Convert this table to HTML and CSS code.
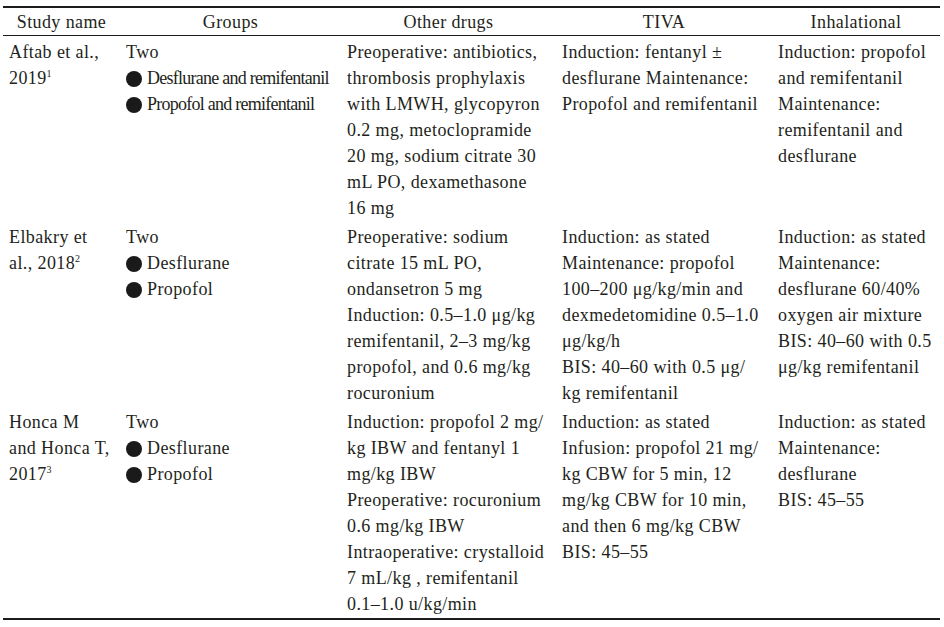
FILE: index.html
```html
<!DOCTYPE html>
<html lang="en">
<head>
<meta charset="utf-8">
<title>Study comparison</title>
<link rel="stylesheet" href="styles.css">
</head>
<body>
<div class="page">
<table class="studies">
  <colgroup>
    <col class="c1"><col class="c2"><col class="c3"><col class="c4"><col class="c5">
  </colgroup>
  <thead>
    <tr>
      <th>Study name</th>
      <th>Groups</th>
      <th>Other drugs</th>
      <th>TIVA</th>
      <th>Inhalational</th>
    </tr>
  </thead>
  <tbody>
    <tr>
      <td>Aftab et al.,<br>2019<span class="ref">1</span></td>
      <td>Two<br><span class="dot"></span><span class="tight">Desflurane and remifentanil</span><br><span class="dot"></span><span class="tight">Propofol and remifentanil</span></td>
      <td>Preoperative: antibiotics,<br>thrombosis prophylaxis<br>with LMWH, glycopyron<br>0.2 mg, metoclopramide<br>20 mg, sodium citrate 30<br>mL PO, dexamethasone<br>16 mg</td>
      <td>Induction: fentanyl ±<br>desflurane Maintenance:<br>Propofol and remifentanil</td>
      <td>Induction: propofol<br>and remifentanil<br>Maintenance:<br>remifentanil and<br>desflurane</td>
    </tr>
    <tr>
      <td>Elbakry et<br>al., 2018<span class="ref">2</span></td>
      <td>Two<br><span class="dot"></span>Desflurane<br><span class="dot"></span>Propofol</td>
      <td>Preoperative: sodium<br>citrate 15 mL PO,<br>ondansetron 5 mg<br>Induction: 0.5–1.0 μg/kg<br>remifentanil, 2–3 mg/kg<br>propofol, and 0.6 mg/kg<br>rocuronium</td>
      <td>Induction: as stated<br>Maintenance: propofol<br>100–200 μg/kg/min and<br>dexmedetomidine 0.5–1.0<br>μg/kg/h<br>BIS: 40–60 with 0.5 μg/<br>kg remifentanil</td>
      <td>Induction: as stated<br>Maintenance:<br>desflurane 60/40%<br>oxygen air mixture<br>BIS: 40–60 with 0.5<br>μg/kg remifentanil</td>
    </tr>
    <tr>
      <td>Honca M<br>and Honca T,<br>2017<span class="ref">3</span></td>
      <td>Two<br><span class="dot"></span>Desflurane<br><span class="dot"></span>Propofol</td>
      <td>Induction: propofol 2 mg/<br>kg IBW and fentanyl 1<br>mg/kg IBW<br>Preoperative: rocuronium<br>0.6 mg/kg IBW<br>Intraoperative: crystalloid<br>7 mL/kg , remifentanil<br>0.1–1.0 u/kg/min</td>
      <td>Induction: as stated<br>Infusion: propofol 21 mg/<br>kg CBW for 5 min, 12<br>mg/kg CBW for 10 min,<br>and then 6 mg/kg CBW<br>BIS: 45–55</td>
      <td>Induction: as stated<br>Maintenance:<br>desflurane<br>BIS: 45–55</td>
    </tr>
  </tbody>
</table>
</div>
</body>
</html>
```
FILE: styles.css
```css
html, body {
  margin: 0;
  padding: 0;
  background: #ffffff;
}

.page {
  padding: 6px 0 0 3px;
}

.studies {
  width: 937px;
  table-layout: fixed;
  border-collapse: collapse;
  border-top: 2px solid #1c1c1c;
  border-bottom: 2px solid #1c1c1c;
  font-family: "Liberation Serif", "Times New Roman", serif;
  font-size: 18px;
  letter-spacing: 0.4px;
  line-height: 26px;
  color: #231f20;
}

.c1 { width: 117px; }
.c2 { width: 221px; }
.c3 { width: 215px; }
.c4 { width: 216px; }
.c5 { width: 168px; }

.studies th {
  font-weight: normal;
  text-align: center;
  padding: 1px 6px 0;
  border-bottom: 1px solid #1c1c1c;
}

.studies td {
  vertical-align: top;
  text-align: left;
  padding: 3px 6px 0;
  white-space: nowrap;
}

.studies tbody tr:last-child td {
  padding-bottom: 1px;
}

.ref {
  font-size: 10px;
  letter-spacing: 0;
  line-height: 0;
  vertical-align: 7px;
}

.dot {
  display: inline-block;
  width: 16px;
  height: 16px;
  border-radius: 50%;
  background: #1a1a1a;
  margin: 0 5px 0 0;
  vertical-align: -3px;
}

.tight {
  letter-spacing: -0.75px;
}
```
